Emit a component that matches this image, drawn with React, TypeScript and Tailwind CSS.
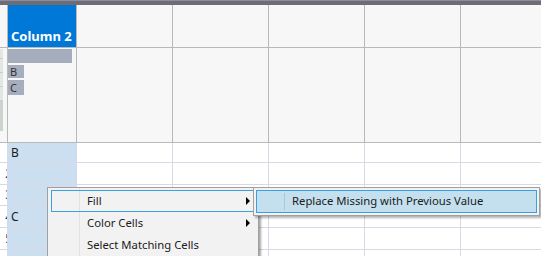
import React from "react";

const dataRows = [
  { h: "h-[20px]", num: "", text: "B" },
  { h: "h-[22px]", num: "2", text: "" },
  { h: "h-[21px]", num: "3", text: "" },
  { h: "h-[22px]", num: "4", text: "C" },
  { h: "h-[22px]", num: "5", text: "" },
  { h: "h-[22px]", num: "6", text: "" },
];

function OtherCols({ border }: { border: string }) {
  return (
    <>
      <div className={`w-[96px] shrink-0 border-r ${border}`} />
      <div className={`w-[96px] shrink-0 border-r ${border}`} />
      <div className={`w-[96px] shrink-0 border-r ${border}`} />
      <div className={`w-[96px] shrink-0 border-r ${border}`} />
      <div className="flex-1" />
    </>
  );
}

export default function App() {
  return (
    <div className="relative w-[541px] h-[256px] overflow-hidden bg-white font-['Noto_Sans',sans-serif] text-[12px] text-[#1b1b1b]">
      {/* top bar */}
      <div className="h-[1px] bg-[#8a8daa]" />
      <div className="h-[4px] bg-[#6d6d72]" />

      {/* header row */}
      <div className="flex h-[43px] bg-[#f7f7f7] border-b border-[#b9b9b9]">
        <div className="w-[8px] shrink-0 border-r border-[#b9b9b9]" />
        <div className="w-[69px] shrink-0 border-r border-[#b9b9b9] bg-[#0078d7] flex flex-col justify-end pl-[3px] pb-[3px]">
          <span className="text-white font-bold text-[13px] leading-[16px]">Column 2</span>
        </div>
        <OtherCols border="border-[#b9b9b9]" />
      </div>

      {/* graph row */}
      <div className="flex h-[95px] bg-[#f7f7f7] border-b border-[#b9b9b9]">
        <div className="w-[8px] shrink-0 border-r border-[#b9b9b9] flex flex-col pt-[1px]">
          <div className="w-[3px] h-[82px] bg-[#e3e7e3] flex flex-col">
            <div className="h-[10px] border-b border-[#c9cfc9]" />
            <div className="h-[14px] border-b border-[#c9cfc9]" />
            <div className="h-[14px] border-b border-[#c9cfc9]" />
            <div className="h-[14px] border-b border-[#c9cfc9]" />
            <div className="flex-1 bg-[#cdd4cd]" />
          </div>
        </div>
        <div className="w-[69px] shrink-0 border-r border-[#b9b9b9] flex flex-col pt-[1px]">
          <div className="w-[64px] h-[14px] bg-[#a6aebe]" />
          <div className="mt-[2px] w-[16px] h-[13px] bg-[#a6aebe] flex items-center pl-[2px] text-[11px] leading-none text-[#333]">B</div>
          <div className="mt-[2px] w-[16px] h-[15px] bg-[#a6aebe] flex items-center pl-[2px] text-[11px] leading-none text-[#333]">C</div>
        </div>
        <OtherCols border="border-[#b9b9b9]" />
      </div>

      {/* data rows */}
      {dataRows.map((r, i) => (
        <div key={i} className={`flex ${r.h} border-b border-[#d9d8e4]`}>
          <div className="w-[7px] shrink-0 overflow-hidden flex items-center justify-end">
            <span className="mr-[-5px] text-[12px] leading-none text-[#1a2a6a]">{r.num}</span>
          </div>
          <div className="w-[70px] shrink-0 bg-[#cbdff0] border-r border-[#d3d8e6] flex items-center pl-[4px]">
            <span className="leading-none">{r.text}</span>
          </div>
          <OtherCols border="border-[#d9d8e4]" />
        </div>
      ))}

      {/* context menu */}
      <div className="absolute left-[47px] top-[187px] w-[212px] h-[80px] border border-[#a0a0a0] bg-[#f2f2f2] shadow-[2px_2px_2px_rgba(0,0,0,0.35)] pl-[3px] pr-[1px] pt-[2px] text-[11.3px]">
        <div className="absolute left-[31px] top-0 bottom-0 w-px bg-[#e2e2e2]" />
        <div className="relative h-[22px] flex items-center border border-[#3c9fe0] pl-[35px]">
          <span>Fill</span>
          <span className="ml-auto mr-[6px] w-0 h-0 border-y-[4px] border-y-transparent border-l-[4px] border-l-black" />
        </div>
        <div className="relative h-[22px] flex items-center border border-transparent pl-[35px]">
          <span>Color Cells</span>
          <span className="ml-auto mr-[6px] w-0 h-0 border-y-[4px] border-y-transparent border-l-[4px] border-l-black" />
        </div>
        <div className="relative h-[22px] flex items-center border border-transparent pl-[35px]">
          <span>Select Matching Cells</span>
        </div>
      </div>

      {/* submenu */}
      <div className="absolute left-[253px] top-[187px] w-[287px] h-[29px] border border-[#a0a0a0] bg-[#f2f2f2] shadow-[2px_2px_2px_rgba(0,0,0,0.3)] p-[2px] text-[11.3px]">
        <div className="h-[23px] flex items-center border border-[#3c9fe0] bg-[#c4e0ee]">
          <div className="w-[28px] h-[17px] border-r border-[#a8c7da]" />
          <span className="pl-[7px]">Replace Missing with Previous Value</span>
        </div>
      </div>
    </div>
  );
}
